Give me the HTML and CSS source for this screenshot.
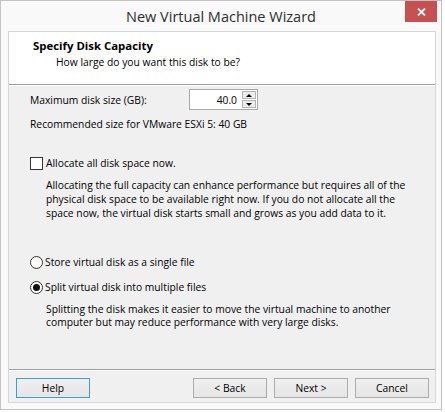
FILE: index.html
```html
<!DOCTYPE html>
<html>
<head>
<meta charset="utf-8">
<link rel="stylesheet" href="styles.css">
</head>
<body>
<div class="window">
  <div class="titlebar">
    <span class="tb-side"></span>
    <div class="title">New Virtual Machine Wizard</div>
    <div class="tb-side tb-right">
      <div class="close">
        <svg width="9" height="8" viewBox="0 0 9 8"><path d="M1 0.5 L8 7.5 M8 0.5 L1 7.5" stroke="#fff" stroke-width="1.8" fill="none"/></svg>
      </div>
    </div>
  </div>
  <div class="client">
    <div class="header">
      <div class="h-title">Specify Disk Capacity</div>
      <div class="h-sub">How large do you want this disk to be?</div>
    </div>
    <div class="content">
      <div class="size-row">
        <span class="size-label">Maximum disk size (GB):</span>
        <div class="spinner">
          <span class="spin-val">40.0</span>
          <div class="spin-btns">
            <div class="spin-btn"><span class="arrow-up"></span></div>
            <div class="spin-btn"><span class="arrow-down"></span></div>
          </div>
        </div>
      </div>
      <div class="rec">Recommended size for VMware ESXi 5: 40 GB</div>
      <div class="check-row"><span class="checkbox"></span><span>Allocate all disk space now.</span></div>
      <p class="desc desc1">Allocating the full capacity can enhance performance but requires all of the<br>physical disk space to be available right now. If you do not allocate all the<br>space now, the virtual disk starts small and grows as you add data to it.</p>
      <div class="radio-row r1"><span class="radio"></span><span>Store virtual disk as a single file</span></div>
      <div class="radio-row r2"><span class="radio checked"></span><span>Split virtual disk into multiple files</span></div>
      <p class="desc desc2">Splitting the disk makes it easier to move the virtual machine to another<br>computer but may reduce performance with very large disks.</p>
    </div>
    <div class="footer">
      <button class="btn btn-default">Help</button>
      <span class="spacer"></span>
      <button class="btn">&lt; Back</button>
      <button class="btn">Next &gt;</button>
      <button class="btn">Cancel</button>
    </div>
  </div>
</div>
</body>
</html>
```
FILE: styles.css
```css
html, body {
  margin: 0;
  padding: 0;
  background: #ffffff;
}
body {
  width: 445px;
  height: 412px;
  font-family: "Open Sans", "Liberation Sans", sans-serif;
  font-size: 10.3px;
  color: #000;
}
.window {
  box-sizing: border-box;
  width: 442px;
  height: 410px;
  border: 1px solid #c2c2c2;
  background: #f9f9f9;
  display: flex;
  flex-direction: column;
}
.titlebar {
  height: 30px;
  display: grid;
  grid-template-columns: 1fr auto 1fr;
  align-items: start;
}
.title {
  font-size: 14.5px;
  line-height: 30px;
  color: #2e2e2e;
  padding-top: 1px;
}
.tb-right {
  display: flex;
  justify-content: flex-end;
  padding-right: 4px;
}
.close {
  width: 32px;
  height: 21px;
  background: #c75050;
  display: flex;
  align-items: center;
  justify-content: center;
}
.client {
  box-sizing: border-box;
  margin: 0 5px 6px 7px;
  height: 372px;
  border: 1px solid #d6d6d6;
  display: flex;
  flex-direction: column;
  background: #f0f0f0;
}
.header {
  height: 52px;
  background: #ffffff;
  border-bottom: 1px solid #a0a0a0;
  box-sizing: content-box;
}
.h-title {
  font-weight: bold;
  font-size: 11.4px;
  padding: 6px 0 0 24px;
  line-height: 16px;
}
.h-sub {
  padding-left: 47px;
  line-height: 16px;
}
.content {
  flex: 1;
  border-top: 1px solid #ffffff;
  padding: 3px 0 0 21px;
}
.size-row {
  display: flex;
  align-items: center;
  height: 21px;
}
.size-label {
  width: 159px;
}
.spinner {
  box-sizing: border-box;
  width: 69px;
  height: 21px;
  border: 1px solid #a8a8a8;
  background: #fff;
  display: flex;
  align-items: center;
  justify-content: flex-end;
}
.spin-val {
  padding-right: 5px;
}
.spin-btns {
  display: flex;
  flex-direction: column;
  gap: 1px;
  margin-right: 1px;
}
.spin-btn {
  box-sizing: border-box;
  width: 14px;
  height: 8px;
  border: 1px solid #b4b4b4;
  background: #ececec;
  display: flex;
  align-items: center;
  justify-content: center;
}
.arrow-up {
  width: 0;
  height: 0;
  border-left: 3px solid transparent;
  border-right: 3px solid transparent;
  border-bottom: 3px solid #000;
}
.arrow-down {
  width: 0;
  height: 0;
  border-left: 3px solid transparent;
  border-right: 3px solid transparent;
  border-top: 3px solid #000;
}
.rec {
  margin-top: 6px;
  line-height: 16px;
}
.check-row, .radio-row {
  display: flex;
  align-items: center;
  height: 16px;
}
.check-row {
  margin-top: 23px;
  gap: 3px;
}
.checkbox {
  box-sizing: border-box;
  width: 13px;
  height: 13px;
  border: 1px solid #333;
  background: #fff;
}
.desc {
  margin: 0 0 0 16px;
  line-height: 14px;
}
.desc1 {
  margin-top: 7px;
}
.radio-row {
  gap: 2px;
}
.r1 {
  margin-top: 34px;
}
.r2 {
  margin-top: 9px;
}
.radio {
  box-sizing: border-box;
  width: 13px;
  height: 13px;
  border: 1px solid #333;
  border-radius: 50%;
  background: #fff;
  display: flex;
  align-items: center;
  justify-content: center;
}
.radio.checked::after {
  content: "";
  width: 7px;
  height: 7px;
  border-radius: 50%;
  background: #111;
}
.desc2 {
  margin-top: 8px;
  line-height: 13px;
}
.footer {
  border-top: 1px solid #a0a0a0;
  box-shadow: inset 0 1px 0 #ffffff;
  height: 33px;
  box-sizing: border-box;
  padding: 8px 6px 0 7px;
  display: flex;
  align-items: flex-start;
  gap: 7px;
}
.spacer {
  flex: 1;
}
.btn {
  box-sizing: border-box;
  width: 74px;
  height: 20px;
  margin: 0;
  padding: 0;
  border: 1px solid #acacac;
  background: linear-gradient(#f0f0f0, #e5e5e5);
  font-family: inherit;
  font-size: 10.3px;
  color: #000;
}
.btn-default {
  border-color: #3c9be8;
}
```
